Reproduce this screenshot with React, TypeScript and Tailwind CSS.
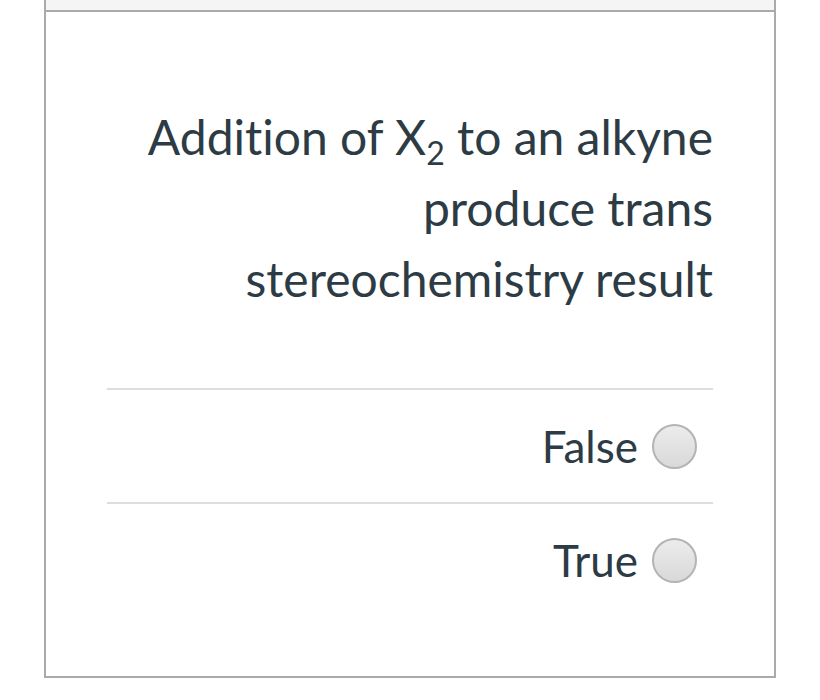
import React from 'react';

const answers = ['False', 'True'];

const Radio: React.FC = () => (
    <span className="inline-block w-[45px] h-[45px] rounded-full border-2 border-[#b4b4b4] bg-gradient-to-b from-[#ececec] to-[#d9d9d9] shrink-0" />
);

const App: React.FC = () => {
    return (
        <div className="w-[820px] h-[700px] bg-white" style={{ fontFamily: 'Lato, "Open Sans", sans-serif' }}>
            <div className="ml-[44px] w-[732px]">
                <div className="h-[10px] bg-[#f5f5f5] border-x-2 border-[#aaaaaa]" />
                <div className="border-2 border-[#aaaaaa] h-[668px] px-[61px] text-[#2d3b45]">
                    <div className="pt-[89px] text-right text-[48px] leading-[71px] [font-variant-ligatures:none]">
                        Addition of X<span className="text-[32px] relative top-[10px] leading-none">2</span> to an alkyne produce trans stereochemistry result
                    </div>
                    <div className="mt-[74px]">
                        {answers.map(a => (
                            <div key={a} className="border-t-2 border-[#dddddd] h-[114px] flex items-center justify-end gap-[14px] pr-[16px]">
                                <span className="text-[44px]">{a}</span>
                                <Radio />
                            </div>
                        ))}
                    </div>
                </div>
            </div>
        </div>
    );
};

export default App;
